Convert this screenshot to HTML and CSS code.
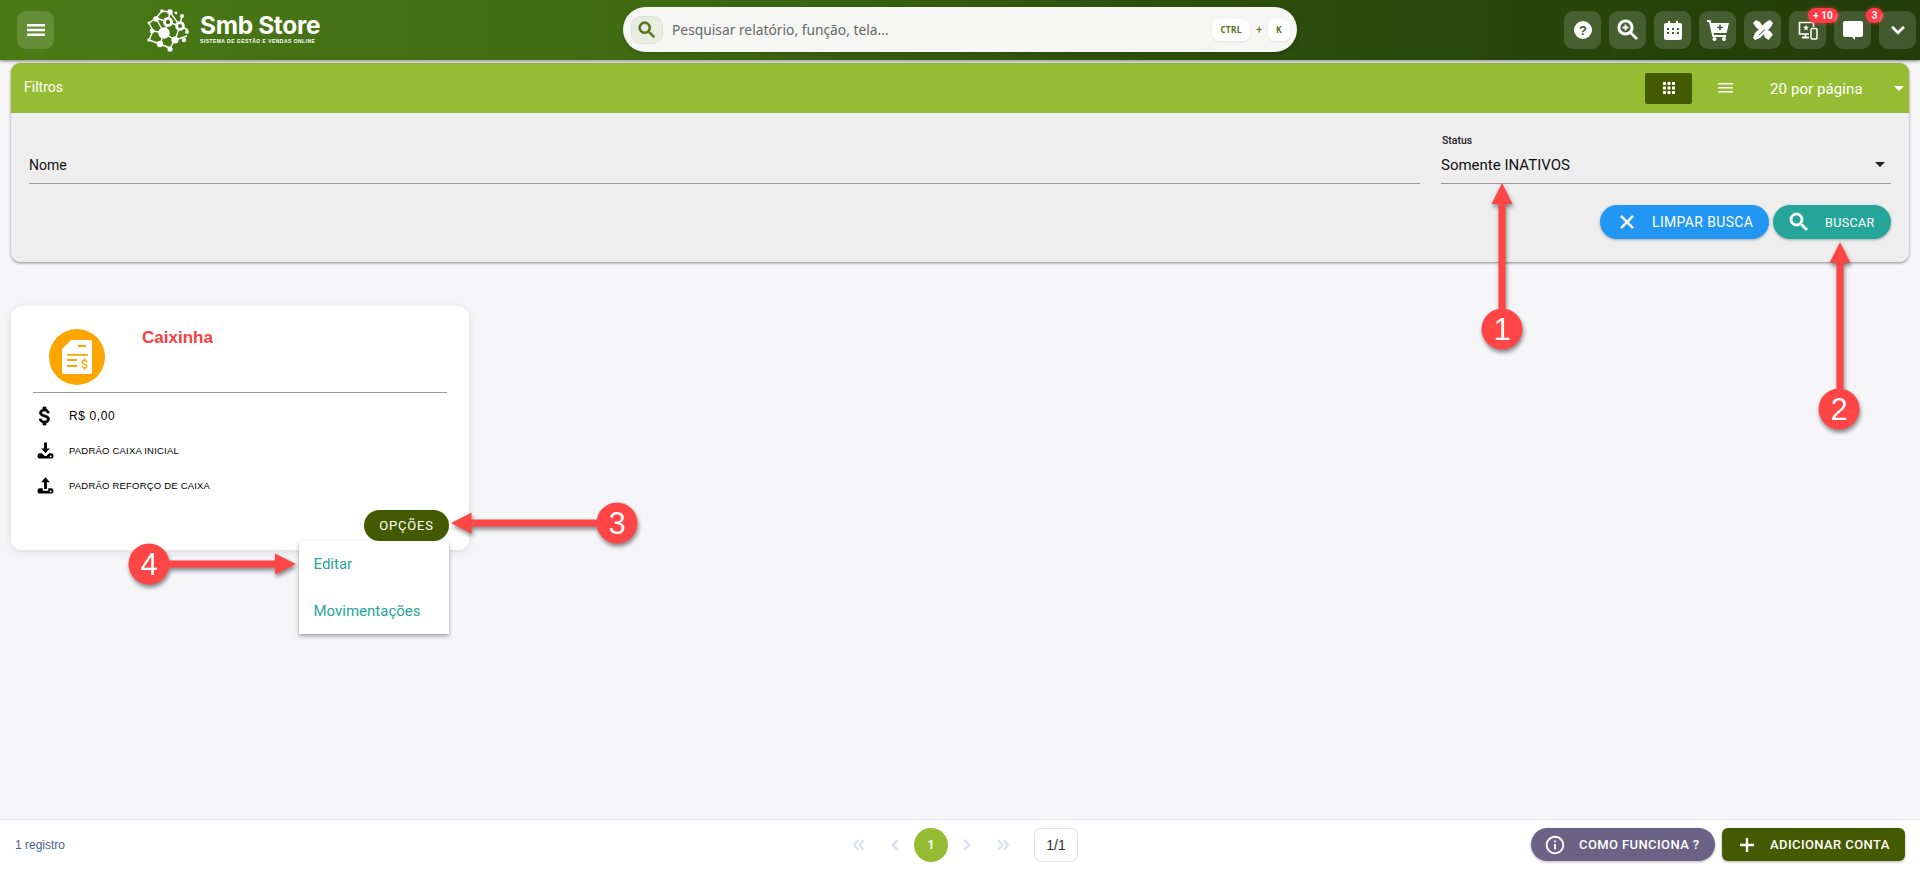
FILE: index.html
```html
<!DOCTYPE html>
<html lang="pt-BR">
<head>
  <meta charset="UTF-8" />
  <title>Smb Store - Contas</title>
  <link rel="stylesheet" href="styles.css">
</head>
<body>
  <header class="topbar">
    <div class="topbar-left">
      <button class="icon-btn">
        <svg width="24" height="24" viewBox="0 0 24 24"><path fill="#fff" d="M3 18h18v-2.4H3V18zm0-4.8h18v-2.4H3v2.4zM3 6v2.4h18V6H3z"/></svg>
      </button>
      <div class="logo">
        <svg class="logo-mark" width="44" height="44" viewBox="0 0 44 44">
          <g stroke="#fff" stroke-width="1.4" fill="none">
            <path d="M18 25L22 14L34 18L29 32L18 25L14 36L24 40M22 14L10 10L18 25L7 23M22 14L24 4L34 18L42 22M29 32L41 28M29 32L24 40M10 10L16 3L24 4M34 18L36 7M7 23L3 15M10 10L3 15M7 23L3 32M14 36L3 32"/>
          </g>
          <g fill="#fff">
            <circle cx="18" cy="25" r="5.8"/>
            <circle cx="22" cy="14" r="5"/>
            <circle cx="34" cy="18" r="4.8"/>
            <circle cx="29" cy="32" r="3.6"/>
            <circle cx="14" cy="36" r="3.2"/>
            <circle cx="24" cy="41" r="2.6"/>
            <circle cx="10" cy="11" r="2.8"/>
            <circle cx="6" cy="23" r="2.4"/>
            <circle cx="3" cy="15" r="1.4"/>
            <circle cx="3" cy="32" r="1.8"/>
            <circle cx="41" cy="24" r="2"/>
            <circle cx="38" cy="32" r="2.2"/>
            <circle cx="24" cy="4" r="2.8"/>
            <circle cx="16" cy="3" r="1.8"/>
            <circle cx="36" cy="8" r="2"/>
            <circle cx="30" cy="5" r="1.4"/>
          </g>
          <circle cx="22" cy="14" r="2.2" fill="#44721a"/>
          <circle cx="34" cy="18" r="2" fill="#44721a"/>
        </svg>
        <div class="logo-text">
          <div class="logo-name">Smb Store</div>
          <div class="logo-sub">SISTEMA DE GESTÃO E VENDAS ONLINE</div>
        </div>
      </div>
    </div>

    <div class="search">
      <span class="search-icon">
        <svg width="22" height="22" viewBox="0 0 24 24"><path fill="#55701f" stroke="#55701f" stroke-width=".8" d="M15.5 14h-.79l-.28-.27C15.41 12.59 16 11.11 16 9.5 16 5.91 13.09 3 9.5 3S3 5.91 3 9.5 5.91 16 9.5 16c1.61 0 3.09-.59 4.23-1.57l.27.28v.79l5 4.99L20.49 19l-4.99-5zm-6 0C7.01 14 5 11.99 5 9.5S7.01 5 9.5 5 14 7.01 14 9.5 11.99 14 9.5 14z"/></svg>
      </span>
      <span class="search-text">Pesquisar relatório, função, tela...</span>
      <span class="key key-ctrl">CTRL</span>
      <span class="key-plus">+</span>
      <span class="key key-k">K</span>
    </div>

    <div class="topbar-right">
      <button class="icon-btn">
        <svg width="20" height="20" viewBox="0 0 20 20"><circle cx="10" cy="10" r="9" fill="#fff"/><text class="help-mark" x="10" y="14.5" text-anchor="middle">?</text></svg>
      </button>
      <button class="icon-btn">
        <svg width="22" height="22" viewBox="0 0 22 22"><circle cx="8.5" cy="8.5" r="6.6" fill="none" stroke="#fff" stroke-width="3"/><path d="M13.5 13.5L20 20" stroke="#fff" stroke-width="2.6"/><path d="M8.5 5.5v6M5.5 8.5h6" stroke="#fff" stroke-width="1.8"/></svg>
      </button>
      <button class="icon-btn">
        <svg width="18" height="20" viewBox="0 0 18 20"><path fill="#fff" d="M2 3h2V1h2v2h6V1h2v2h2a2 2 0 0 1 2 2v13a2 2 0 0 1-2 2H2a2 2 0 0 1-2-2V5a2 2 0 0 1 2-2z"/><path fill="#44562f" d="M3 8h2v2H3zM8 8h2v2H8zM13 8h2v2h-2zM3 12h2v2H3zM8 12h2v2H8zM13 12h2v2h-2z"/></svg>
      </button>
      <button class="icon-btn">
        <svg width="22" height="22" viewBox="0 0 22 22"><path fill="#fff" d="M0 1h3.6l.7 3H22l-2.4 10H6.6l.5 2H19v2H5.4L2 3H0z"/><circle cx="7.5" cy="20" r="2" fill="#fff"/><circle cx="17" cy="20" r="2" fill="#fff"/><path d="M13 5.8v5.4M10.3 8.5h5.4" stroke="#44562f" stroke-width="1.6"/></svg>
      </button>
      <button class="icon-btn">
        <svg width="22" height="22" viewBox="0 0 22 22"><path fill="#fff" d="M1 4l3-3 4 2 2.5 4 3.5 3.5 4 1.5 3 3.5-4.500 5.500-3.500-2.500-1.500-3.500L8 11 4.500 9z"/><path fill="#fff" d="M21 4l-3-3-4 2-11 11-2 5 2 2 5-2L19 8z"/><path d="M13 10.5L7 16" stroke="#44562f" stroke-width="1"/></svg>
      </button>
      <button class="icon-btn">
        <span class="badge badge-wide">+ 10</span>
        <svg width="20" height="19" viewBox="0 0 20 19"><path fill="none" stroke="#fff" stroke-width="1.6" d="M11 13H1.500V1.500h14V6"/><path stroke="#fff" stroke-width="1.8" d="M4 16.500h7M7.500 13v3"/><path fill="#fff" d="M8 3.800l.9 2h2.100l-1.700 1.400.7 2.200L8 8.200 6 9.400l.7-2.200L5 5.800h2.100z"/><rect x="13" y="7.500" width="6" height="10.500" rx="1" fill="none" stroke="#fff" stroke-width="1.500"/></svg>
      </button>
      <button class="icon-btn">
        <span class="badge badge-round">3</span>
        <svg width="24" height="24" viewBox="0 0 24 24"><path fill="#fff" d="M20 3H4c-1.100 0-2 .9-2 2v12c0 1.100.9 2 2 2h7l3 3v-3h6c1.100 0 2-.9 2-2V5c0-1.100-.9-2-2-2z"/></svg>
      </button>
      <button class="icon-btn">
        <svg width="26" height="26" viewBox="0 0 24 24"><path fill="#fff" stroke="#fff" stroke-width=".7" d="M7.410 8.590L12 13.170l4.590-4.580L18 10l-6 6-6-6 1.410-1.410z"/></svg>
      </button>
    </div>
  </header>

  <main class="page">
    <section class="filters">
      <div class="filters-head">
        <span class="filters-title">Filtros</span>
        <span class="view-btn active">
          <svg width="12" height="12" viewBox="0 0 12 12"><path fill="#fff" d="M0 0h3v3H0zM4.500 0h3v3h-3zM9 0h3v3H9zM0 4.500h3v3H0zM4.500 4.500h3v3h-3zM9 4.500h3v3H9zM0 9h3v3H0zM4.500 9h3v3h-3zM9 9h3v3H9z"/></svg>
        </span>
        <span class="view-btn">
          <svg width="15" height="10" viewBox="0 0 15 10"><path fill="#fff" d="M0 0h15v1.500H0zM0 4h15v1.500H0zM0 8h15v1.500H0z"/></svg>
        </span>
        <span class="per-page">20 por página</span>
        <span class="caret caret-white"></span>
      </div>
      <div class="filters-body">
        <div class="fields">
          <div class="field">
            <span class="field-value field-name">Nome</span>
          </div>
          <div class="field">
            <label class="field-label">Status</label>
            <span class="field-value">Somente INATIVOS</span>
            <span class="caret caret-dark"></span>
          </div>
        </div>
        <div class="filter-actions">
          <button class="btn btn-clear">
            <svg width="22" height="22" viewBox="0 0 24 24"><path fill="#fff" stroke="#fff" stroke-width="1" d="M19 6.410L17.590 5 12 10.590 6.410 5 5 6.410 10.590 12 5 17.590 6.410 19 12 13.410 17.590 19 19 17.590 13.410 12z"/></svg>
            <span>LIMPAR BUSCA</span>
          </button>
          <button class="btn btn-search">
            <svg width="24" height="24" viewBox="0 0 24 24"><path fill="#fff" stroke="#fff" stroke-width=".8" d="M15.500 14h-.79l-.28-.27C15.410 12.590 16 11.110 16 9.500 16 5.910 13.090 3 9.500 3S3 5.910 3 9.500 5.910 16 9.500 16c1.610 0 3.090-.59 4.230-1.570l.27.28v.79l5 4.990L20.490 19l-4.990-5zm-6 0C7.010 14 5 11.990 5 9.500S7.010 5 9.500 5 14 7.010 14 9.500 11.990 14 9.500 14z"/></svg>
            <span>BUSCAR</span>
          </button>
        </div>
      </div>
    </section>

    <article class="account-card">
      <div class="card-top">
        <span class="card-avatar">
          <svg width="32" height="36" viewBox="0 0 32 36">
            <path fill="#fff" d="M10 1h19a2 2 0 0 1 2 2v30a2 2 0 0 1-2 2H3a2 2 0 0 1-2-2V10z"/>
            <path fill="#ffa500" d="M17 6h8v2h-8zM6 15h21v1.800H6zM6 20h10v2H6zM6 26h10v2H6z"/>
            <path fill="#ffa500" transform="translate(16.500 18) scale(.6)" d="M11.800 10.900c-2.270-.59-3-1.200-3-2.150 0-1.090 1.010-1.850 2.700-1.850 1.780 0 2.440.85 2.500 2.100h2.210c-.07-1.720-1.120-3.300-3.210-3.810V3h-3v2.160c-1.940.42-3.500 1.680-3.500 3.610 0 2.310 1.910 3.460 4.700 4.130 2.500.6 3 1.480 3 2.410 0 .69-.49 1.790-2.700 1.790-2.060 0-2.870-.92-2.980-2.100h-2.200c.12 2.190 1.760 3.420 3.680 3.830V21h3v-2.150c1.950-.37 3.500-1.500 3.500-3.550 0-2.840-2.430-3.810-4.700-4.400z"/>
          </svg>
        </span>
        <h2 class="card-title">Caixinha</h2>
      </div>
      <ul class="card-rows">
        <li class="card-row">
          <svg width="24" height="24" viewBox="0 0 24 24"><path stroke="#000" stroke-width=".7" d="M11.800 10.900c-2.270-.59-3-1.200-3-2.150 0-1.090 1.010-1.850 2.700-1.850 1.780 0 2.440.85 2.500 2.100h2.210c-.07-1.720-1.120-3.300-3.210-3.810V3h-3v2.160c-1.940.42-3.500 1.680-3.500 3.610 0 2.310 1.910 3.460 4.700 4.130 2.500.6 3 1.480 3 2.410 0 .69-.49 1.790-2.700 1.790-2.060 0-2.870-.92-2.980-2.100h-2.200c.12 2.190 1.760 3.420 3.680 3.830V21h3v-2.150c1.950-.37 3.500-1.500 3.500-3.550 0-2.840-2.430-3.810-4.700-4.400z"/></svg>
          <span class="row-money">R$ 0,00</span>
        </li>
        <li class="card-row">
          <svg class="tray" viewBox="0 0 24 24"><path d="M10.200 2h3.600v7.500H17.500L12 15.500 6.500 9.500h3.700z"/><path d="M2 18.500C2 16.500 3 15.500 5 15.500h2.500L11 19h2l3.500-3.500H19c2 0 3 1 3 3v1.500c0 1-1 2-2 2H4c-1 0-2-1-2-2z"/><circle cx="18.500" cy="19.500" r="1.100" fill="#fff"/></svg>
          <span class="row-label">PADRÃO CAIXA INICIAL</span>
        </li>
        <li class="card-row">
          <svg class="tray" viewBox="0 0 24 24"><path d="M12 1.500L17.500 8H13.800v8.500h-3.600V8H6.500z"/><path d="M2 18.500C2 16.500 3 15.500 5 15.500H8.500V18.500h7V15.500H19c2 0 3 1 3 3v1.500c0 1-1 2-2 2H4c-1 0-2-1-2-2z"/><circle cx="18.500" cy="19.500" r="1.100" fill="#fff"/></svg>
          <span class="row-label">PADRÃO REFORÇO DE CAIXA</span>
        </li>
      </ul>
      <button class="options-btn">OPÇÕES</button>
      <div class="options-menu">
        <a class="options-item">Editar</a>
        <a class="options-item">Movimentações</a>
      </div>
    </article>
  </main>

  <footer class="footer">
    <div class="footer-count">1 registro</div>
    <nav class="pager">
      <span class="pager-arrow"><svg width="12" height="12" viewBox="0 0 12 12"><path d="M5.500 1L1 6l4.500 5M11 1L6.500 6l4.500 5"/></svg></span>
      <span class="pager-arrow"><svg width="8" height="12" viewBox="0 0 8 12"><path d="M7 1L1.500 6 7 11"/></svg></span>
      <span class="pager-current">1</span>
      <span class="pager-arrow"><svg width="8" height="12" viewBox="0 0 8 12"><path d="M1 1l5.500 5L1 11"/></svg></span>
      <span class="pager-arrow"><svg width="12" height="12" viewBox="0 0 12 12"><path d="M1 1l4.500 5L1 11M6.500 1L11 6l-4.500 5"/></svg></span>
      <span class="pager-total">1/1</span>
    </nav>
    <div class="footer-actions">
      <button class="btn btn-help">
        <svg width="22" height="22" viewBox="0 0 24 24"><path fill="#fff" d="M11 7h2v2h-2zm0 4h2v6h-2zm1-9C6.480 2 2 6.480 2 12s4.480 10 10 10 10-4.480 10-10S17.520 2 12 2zm0 18c-4.410 0-8-3.590-8-8s3.590-8 8-8 8 3.590 8 8-3.590 8-8 8z"/></svg>
        <span>COMO FUNCIONA ?</span>
      </button>
      <button class="btn btn-add">
        <svg width="24" height="24" viewBox="0 0 24 24"><path fill="#fff" d="M19 13.200h-5.800V19h-2.400v-5.800H5v-2.400h5.800V5h2.400v5.800H19z"/></svg>
        <span>ADICIONAR CONTA</span>
      </button>
    </div>
  </footer>

  <!-- setas numeradas por cima da tela -->
  <svg class="notes" width="1920" height="869" viewBox="0 0 1920 869">
    <g class="note">
      <path class="note-line" d="M1502 200V329"/>
      <path class="note-fill" d="M1502 183l10.500 21h-21z"/>
      <circle class="note-fill" cx="1502" cy="329" r="20.500"/>
      <text class="note-num" x="1502" y="340">1</text>
    </g>
    <g class="note">
      <path class="note-line" d="M1840 260V409"/>
      <path class="note-fill" d="M1840 242l10.500 21h-21z"/>
      <circle class="note-fill" cx="1839" cy="409" r="20.500"/>
      <text class="note-num" x="1839" y="420">2</text>
    </g>
    <g class="note">
      <path class="note-line" d="M468 523H617"/>
      <path class="note-fill" d="M451 523l20.500-10.500v21z"/>
      <circle class="note-fill" cx="617" cy="523" r="20.500"/>
      <text class="note-num" x="617" y="534">3</text>
    </g>
    <g class="note">
      <path class="note-line" d="M149 564H280"/>
      <path class="note-fill" d="M296 564l-21-10.500v21z"/>
      <circle class="note-fill" cx="149" cy="564" r="20.500"/>
      <text class="note-num" x="149" y="575">4</text>
    </g>
  </svg>
</body>
</html>
```

FILE: styles.css
```css
* {
  box-sizing: border-box;
}
body {
  margin: 0;
  background: #f6f6f9;
  color: #111;
  font-family: 'Roboto', sans-serif;
  display: flex;
  flex-direction: column;
  height: 869px;
  overflow: hidden;
  position: relative;
}
button {
  font-family: inherit;
  border: none;
  cursor: pointer;
}

/* topo */
.topbar {
  height: 60px;
  flex-shrink: 0;
  display: grid;
  grid-template-columns: 1fr 674px 1fr;
  align-items: center;
  padding: 0 4px;
  background: linear-gradient(90deg, #4a7a16 0%, #3f6a12 35%, #2e500d 60%, #223c0a 100%);
  box-shadow: 0 1px 3px rgba(0, 0, 0, 0.5);
  position: relative;
}
.topbar-left {
  display: flex;
  align-items: center;
  padding-left: 13px;
}
.topbar-right {
  display: flex;
  justify-content: flex-end;
  gap: 8px;
}
.icon-btn {
  position: relative;
  width: 37px;
  height: 38px;
  padding: 0;
  border-radius: 9px;
  background: rgba(255, 255, 255, 0.15);
  display: flex;
  align-items: center;
  justify-content: center;
}
.help-mark {
  font: bold 13px 'Liberation Sans', sans-serif;
  fill: #44562f;
}
.badge {
  position: absolute;
  top: -3px;
  height: 15px;
  line-height: 15px;
  border-radius: 8px;
  background: #ff3b47;
  color: #fff;
  font-size: 10px;
  font-weight: 700;
  text-align: center;
  box-shadow: 0 0 4px rgba(255, 59, 71, 0.7);
}
.badge-wide {
  left: 19px;
  width: 30px;
}
.badge-round {
  left: 32px;
  width: 17px;
}
.logo {
  margin-left: 92px;
  display: flex;
  align-items: center;
  gap: 10px;
  margin-top: -2px;
}
.logo-mark {
  flex-shrink: 0;
  margin-top: 2px;
}
.logo-name {
  color: #fff;
  font-family: 'Inter', sans-serif;
  font-weight: 700;
  font-size: 24.4px;
  line-height: 24px;
  letter-spacing: -0.3px;
  white-space: nowrap;
}
.logo-sub {
  color: #fff;
  font-family: 'Liberation Sans', sans-serif;
  font-weight: 700;
  font-size: 5px;
  line-height: 7px;
  margin-top: 1px;
  letter-spacing: 0.46px;
  white-space: nowrap;
}
.search {
  height: 45px;
  margin-top: -1px;
  display: flex;
  align-items: center;
  padding: 0 7px 0 8px;
  border-radius: 23px;
  background: #f6f7f4;
  box-shadow: 0 2px 5px rgba(0, 0, 0, 0.15);
}
.search-icon {
  width: 32px;
  height: 28px;
  border-radius: 10px;
  background: #e9ede0;
  border: 1px solid #dde2cf;
  display: flex;
  align-items: center;
  justify-content: center;
}
.search-text {
  flex: 1;
  margin-left: 9px;
  font-family: 'Noto Sans', sans-serif;
  font-size: 13.8px;
  color: #666;
  white-space: nowrap;
}
.key {
  height: 22px;
  line-height: 22px;
  border-radius: 7px;
  background: #fff;
  text-align: center;
  font-family: 'DejaVu Sans Mono', monospace;
  font-size: 9px;
  font-weight: 700;
  color: #55701f;
  box-shadow: 0 1px 2px rgba(0, 0, 0, 0.08);
}
.key-ctrl {
  width: 38px;
}
.key-k {
  width: 22px;
}
.key-plus {
  width: 18px;
  text-align: center;
  font-size: 11px;
  color: #55701f;
}

/* conteudo */
.page {
  flex: 1;
  padding: 3px 11px 0;
  min-height: 0;
}
.filters {
  height: 199px;
  border-radius: 9px;
  background: #eeeeee;
  box-shadow: 0 1px 3px rgba(0, 0, 0, 0.45);
  overflow: hidden;
}
.filters-head {
  height: 50px;
  display: flex;
  align-items: center;
  padding: 0 5px 0 13px;
  background: #96bc33;
  color: #fff;
}
.filters-title {
  flex: 1;
  font-size: 14px;
  margin-top: -2px;
}
.view-btn {
  width: 47px;
  height: 31px;
  border-radius: 2px;
  display: flex;
  align-items: center;
  justify-content: center;
  margin-right: 10px;
}
.view-btn.active {
  background: #445a00;
}
.per-page {
  width: 124px;
  margin-left: 11px;
  margin-top: 2px;
  font-size: 15px;
  letter-spacing: 0.1px;
  white-space: nowrap;
}
.caret {
  display: inline-block;
  width: 0;
  height: 0;
  border-left: 5px solid transparent;
  border-right: 5px solid transparent;
}
.caret-white {
  border-top: 5px solid #fff;
}
.caret-dark {
  border-top: 5px solid #222;
  position: absolute;
  right: 6px;
  top: 49px;
}
.filters-body {
  padding: 0 18px;
}
.fields {
  display: grid;
  grid-template-columns: 1fr 450px;
  gap: 21px;
}
.field {
  position: relative;
  height: 71px;
  border-bottom: 1px solid #999;
  display: flex;
  align-items: flex-end;
  padding-bottom: 8px;
}
.field-label {
  position: absolute;
  left: 1px;
  top: 21px;
  font-size: 10.5px;
  font-weight: 500;
  color: #222;
}
.field-value {
  font-size: 15px;
  line-height: 20px;
  color: #111;
}
.field-name {
  font-size: 14px;
}
.filter-actions {
  display: flex;
  justify-content: flex-end;
  gap: 4px;
  margin-top: 21px;
}
.btn {
  display: flex;
  align-items: center;
  color: #fff;
  font-weight: 500;
  white-space: nowrap;
}
.btn-clear {
  width: 169px;
  height: 34px;
  padding: 0 0 0 16px;
  gap: 14px;
  border-radius: 17px;
  background: #2196f3;
  font-size: 14px;
  font-weight: 400;
  letter-spacing: 0.35px;
  box-shadow: 0 1px 3px rgba(0, 0, 0, 0.3);
}
.btn-search {
  width: 118px;
  height: 34px;
  padding: 0 0 0 14px;
  gap: 14px;
  border-radius: 17px;
  background: #26a69a;
  font-size: 12.5px;
  font-weight: 400;
  letter-spacing: 0.4px;
  box-shadow: 0 1px 3px rgba(0, 0, 0, 0.3);
}

/* card da conta */
.account-card {
  position: relative;
  width: 458px;
  height: 244px;
  margin-top: 44px;
  padding: 0 22px;
  border-radius: 11px;
  background: #fff;
  box-shadow: 0 2px 8px rgba(0, 0, 0, 0.1);
}
.card-top {
  height: 87px;
  display: flex;
  border-bottom: 1px solid #999;
  padding-left: 16px;
}
.card-avatar {
  width: 56px;
  height: 56px;
  margin-top: 23px;
  border-radius: 50%;
  background: #ffa500;
  display: flex;
  align-items: center;
  justify-content: center;
}
.card-title {
  margin: 22px 0 0 37px;
  font-family: 'Liberation Sans', sans-serif;
  font-size: 17px;
  font-weight: 700;
  color: #f44040;
}
.card-rows {
  list-style: none;
  margin: 5px 0 0;
  padding: 0;
}
.card-row {
  height: 35px;
  display: flex;
  align-items: center;
  gap: 12px;
  font-family: 'Liberation Sans', sans-serif;
  color: #000;
}
.tray {
  width: 19px;
  height: 19px;
  margin: 0 2.5px;
}
.row-money {
  font-size: 12px;
  letter-spacing: 0.6px;
}
.row-label {
  font-size: 9.5px;
  letter-spacing: 0.2px;
}
.options-btn {
  position: absolute;
  right: 20px;
  bottom: 9px;
  width: 85px;
  height: 31px;
  border-radius: 16px;
  background: #445a00;
  color: #fff;
  font-size: 13px;
  font-weight: 400;
  letter-spacing: 0.8px;
}
.options-menu {
  position: absolute;
  left: 288px;
  top: 235px;
  width: 150px;
  height: 93px;
  background: #fff;
  box-shadow: 0 2px 4px rgba(0, 0, 0, 0.35);
  z-index: 2;
}
.options-item {
  display: block;
  height: 47px;
  line-height: 46px;
  padding-left: 14.5px;
  font-size: 15px;
  color: #26a69a;
}

/* rodape */
.footer {
  height: 50px;
  flex-shrink: 0;
  display: grid;
  grid-template-columns: 1fr auto 1fr;
  align-items: center;
  padding: 0 15px;
  background: #fff;
  border-top: 1px solid #e2e3e8;
}
.footer-count {
  font-family: 'Liberation Sans', sans-serif;
  font-size: 12px;
  color: #4a6484;
}
.pager {
  display: flex;
  align-items: center;
  gap: 2px;
}
.pager-arrow {
  width: 34px;
  height: 34px;
  display: flex;
  align-items: center;
  justify-content: center;
}
.pager-arrow svg {
  fill: none;
  stroke: #dde2ea;
  stroke-width: 2.4;
}
.pager-current {
  width: 34px;
  height: 34px;
  line-height: 34px;
  border-radius: 50%;
  background: #96bc33;
  color: #fff;
  font-size: 12px;
  font-weight: 700;
  text-align: center;
}
.pager-total {
  width: 44px;
  height: 34px;
  line-height: 32px;
  margin-left: 12px;
  border: 1px solid #dfe2e8;
  border-radius: 7px;
  text-align: center;
  font-family: 'Liberation Sans', sans-serif;
  font-size: 14px;
  color: #333;
}
.footer-actions {
  display: flex;
  justify-content: flex-end;
  gap: 7px;
}
.btn-help {
  width: 184px;
  height: 33px;
  padding: 0 0 0 13px;
  gap: 13px;
  border-radius: 17px;
  background: #6b6385;
  font-size: 13px;
  letter-spacing: 0.4px;
  box-shadow: 0 1px 3px rgba(0, 0, 0, 0.3);
}
.btn-add {
  width: 183px;
  height: 33px;
  padding: 0 0 0 13px;
  gap: 11px;
  border-radius: 6px;
  background: #445a00;
  font-size: 13px;
  letter-spacing: 0.4px;
  box-shadow: 0 1px 3px rgba(0, 0, 0, 0.3);
}

/* setas de anotacao */
.notes {
  position: absolute;
  left: 0;
  top: 0;
  pointer-events: none;
  z-index: 5;
}
.note {
  filter: drop-shadow(1px 3px 2px rgba(0, 0, 0, 0.45));
}
.note-line {
  fill: none;
  stroke: #ff4545;
  stroke-width: 7;
}
.note-fill {
  fill: #ff4545;
}
.note-num {
  fill: #fff;
  font-family: 'Liberation Sans', sans-serif;
  font-size: 31px;
  text-anchor: middle;
}
```
